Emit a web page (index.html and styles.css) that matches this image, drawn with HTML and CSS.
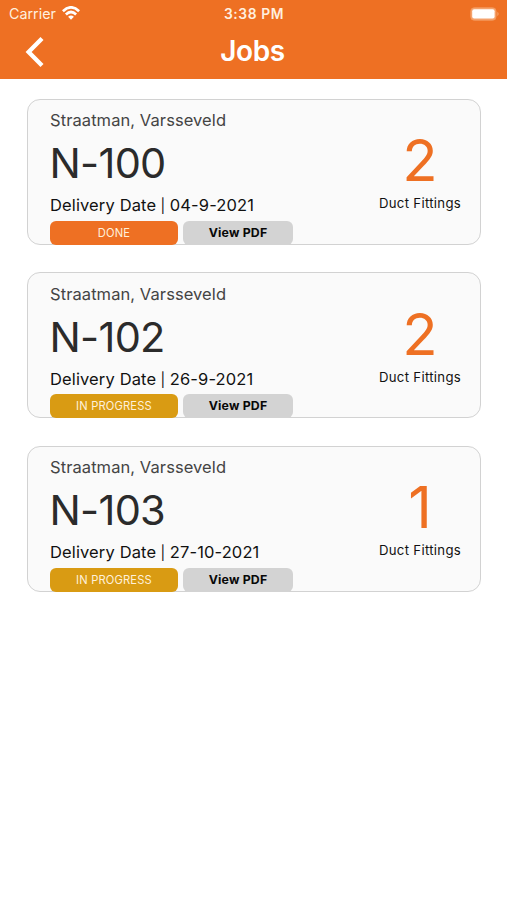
FILE: index.html
```html
<!DOCTYPE html>
<html lang="en">
<head>
<meta charset="utf-8">
<title>Jobs</title>
<link rel="stylesheet" href="styles.css">
</head>
<body>
<header class="header">
  <div class="status-bar">
    <div class="network"><span class="carrier">Carrier</span>
      <svg class="wifi" width="18" height="14" viewBox="0 0 18 14" fill="none" stroke="currentColor" stroke-width="2.7"><path d="M.9 5.2Q9-2.5 17.1 5.2M3.9 8.4Q9 3.6 14.1 8.4"/><path d="M9 13.8 6.1 10.8Q9 8.3 11.9 10.8Z" fill="currentColor" stroke="none"/></svg>
    </div>
    <span class="clock">3:38 PM</span>
    <svg class="battery" width="30" height="14" viewBox="0 0 30 14"><rect x=".7" y=".7" width="25.4" height="12.6" rx="3.6" fill="#f5a46f" stroke="#f39a60" stroke-width=".8"/><rect x="2.2" y="2.2" width="22.4" height="9.2" rx="2" fill="#fff"/><path d="M27.4 4.8q2.4 2.2 0 4.4z" fill="#f5a46f"/></svg>
  </div>
  <nav class="nav">
    <svg class="back" width="20" height="32" viewBox="0 0 20 32" fill="none" stroke="#fff" stroke-width="4.3"><path d="M17 2.6 3.6 16.1 17 29.6"/></svg>
    <h1 class="title">Jobs</h1>
  </nav>
</header>
<main class="jobs">
  <article class="card">
    <div class="details">
      <div class="client">Straatman, Varsseveld</div>
      <div class="number">N-100</div>
      <div class="delivery">Delivery Date <span class="divider">|</span> 04-9-2021</div>
      <div class="actions"><span class="chip done">DONE</span><span class="chip pdf">View PDF</span></div>
    </div>
    <div class="fittings"><div class="count">2</div><div class="label">Duct Fittings</div></div>
  </article>
  <article class="card">
    <div class="details">
      <div class="client">Straatman, Varsseveld</div>
      <div class="number">N-102</div>
      <div class="delivery">Delivery Date <span class="divider">|</span> 26-9-2021</div>
      <div class="actions"><span class="chip progress">IN PROGRESS</span><span class="chip pdf">View PDF</span></div>
    </div>
    <div class="fittings"><div class="count">2</div><div class="label">Duct Fittings</div></div>
  </article>
  <article class="card">
    <div class="details">
      <div class="client">Straatman, Varsseveld</div>
      <div class="number">N-103</div>
      <div class="delivery">Delivery Date <span class="divider">|</span> 27-10-2021</div>
      <div class="actions"><span class="chip progress">IN PROGRESS</span><span class="chip pdf">View PDF</span></div>
    </div>
    <div class="fittings"><div class="count">1</div><div class="label">Duct Fittings</div></div>
  </article>
</main>
</body>
</html>
```
FILE: styles.css
```css
* { box-sizing: border-box; }
body { margin: 0; min-height: 900px; background: #fff; color: #111; font-family: Inter, "Liberation Sans", sans-serif; }
.header { height: 79px; background: #ee7023; color: #fff; }
.status-bar { display: grid; grid-template-columns: 1fr auto 1fr; height: 27px; padding: 0 7px 0 9px; align-items: center; color: #ffefdf; }
.network { display: flex; align-items: center; gap: 6px; }
.carrier { font-size: 14.3px; line-height: 27px; margin-top: -1px; }
.wifi { color: #fff; margin-top: -2px; }
.clock { font-size: 13.8px; font-weight: 600; line-height: 27px; letter-spacing: .6px; margin-right: 1px; padding-top: 1px; }
.battery { justify-self: end; margin-top: -1px; }
.nav { display: grid; grid-template-columns: 1fr auto 1fr; height: 52px; padding: 0 27px 0 25px; }
.back { margin-top: 9px; }
.title { margin: 0; font-size: 28px; font-weight: 600; line-height: 49px; letter-spacing: -.4px; }
.jobs { display: flex; flex-direction: column; gap: 27.5px; padding: 19.5px 26px 0 26.5px; }
.card { display: flex; justify-content: space-between; height: 146px; padding: 8.5px 18px 0 22.5px; border: 1px solid #d2d2d2; border-radius: 13px; background: #fafafa; }
.details, .label { white-space: nowrap; }
.client { font-size: 16.5px; line-height: 24px; letter-spacing: .08px; color: #444; }
.number { font-size: 41.5px; line-height: 63px; letter-spacing: -.7px; color: #2b2b2b; margin-left: -.5px; }
.delivery { height: 20.5px; font-size: 16.5px; line-height: 20.5px; letter-spacing: .13px; }
.divider { font-size: 14px; line-height: 1; margin: 0 -.4px; }
.actions { display: flex; gap: 5px; margin-top: 5px; }
.chip { height: 24px; border-radius: 6px; line-height: 24px; text-align: center; }
.done, .progress { width: 128px; font-size: 11.2px; letter-spacing: .15px; color: #fff0da; }
.done { background: #ee7023; }
.progress { background: #d99b13; }
.pdf { width: 110px; background: #d3d3d3; font-size: 12.3px; font-weight: 700; letter-spacing: .2px; color: #080808; }
.fittings { width: 84px; padding-top: 24px; text-align: center; }
.count { font-size: 58px; line-height: 57px; color: #ee7023; }
.label { font-size: 13.2px; line-height: 29px; letter-spacing: .3px; }
```
